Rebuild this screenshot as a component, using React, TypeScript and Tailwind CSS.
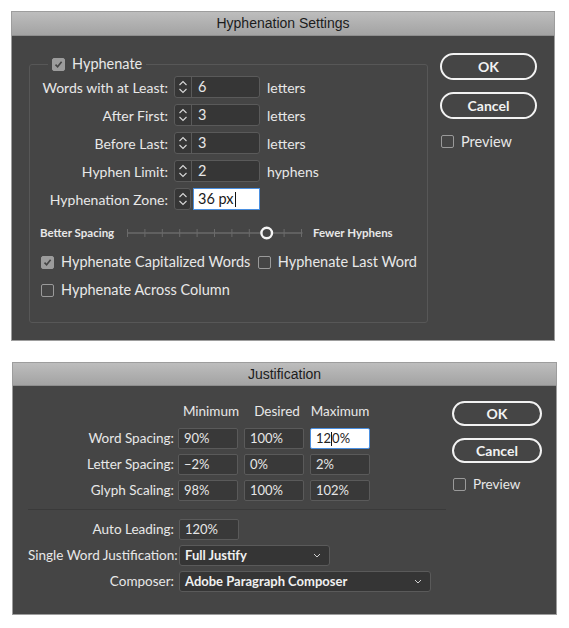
import React from "react"

function Check({ checked = false }: { checked?: boolean }) {
  return (
    <span
      className={
        "inline-flex h-[13px] w-[13px] shrink-0 items-center justify-center rounded-[2px] border " +
        (checked ? "border-[#9c9c9c] bg-[#9c9c9c]" : "border-[#9a9a9a] bg-transparent")
      }
    >
      {checked && (
        <svg width="9" height="9" viewBox="0 0 9 9">
          <path d="M1.5 4.6 L3.6 6.8 L7.6 1.8" fill="none" stroke="#454545" strokeWidth="1.6" />
        </svg>
      )}
    </span>
  )
}

function Arrows() {
  return (
    <svg width="10" height="16" viewBox="0 0 10 16">
      <path d="M1.5 6 L5 2.5 L8.5 6" fill="none" stroke="#d8d8d8" strokeWidth="1.1" />
      <path d="M1.5 10 L5 13.5 L8.5 10" fill="none" stroke="#d8d8d8" strokeWidth="1.1" />
    </svg>
  )
}

function Spinner({ value }: { value: string }) {
  return (
    <div className="flex h-[22px] w-[86px] items-stretch rounded-[3px] border border-[#5a5a5a] bg-[#363636]">
      <div className="flex w-[17px] items-center justify-center border-r border-[#5a5a5a]">
        <Arrows />
      </div>
      <div className="flex items-center pl-[6px] text-[14.5px] text-[#e8e8e8]">{value}</div>
    </div>
  )
}

function Pill({ label, w, h }: { label: string; w: string; h: string }) {
  return (
    <button
      type="button"
      className={
        "flex items-center justify-center rounded-full border-2 border-[#f2f2f2] text-[14px] font-bold text-[#f2f2f2] " +
        w +
        " " +
        h
      }
    >
      {label}
    </button>
  )
}

function TitleBar({ title, h }: { title: string; h: string }) {
  return (
    <div
      className={
        "flex items-center justify-center border-b border-[#8e8e8e] bg-gradient-to-b from-[#bdbdbd] to-[#a3a3a3] font-['Liberation_Sans',sans-serif] text-[14px] text-[#1c1c1c] " +
        h
      }
    >
      {title}
    </div>
  )
}

function Field({ value, focus = false }: { value: React.ReactNode; focus?: boolean }) {
  return (
    <div
      className={
        "flex h-[21px] w-[60px] items-center rounded-[2px] border pl-[5px] text-[13px] " +
        (focus ? "border-[#4a8fe0] bg-white text-[#222]" : "border-[#5a5a5a] bg-[#393939] text-[#e6e6e6]")
      }
    >
      {value}
    </div>
  )
}

function Dropdown({ value, w }: { value: string; w: string }) {
  return (
    <div
      className={
        "flex h-[21px] items-center justify-between rounded-[3px] border border-[#5a5a5a] bg-[#353535] pl-[5px] pr-[8px] text-[13px] font-bold text-[#f0f0f0] " +
        w
      }
    >
      <span>{value}</span>
      <svg width="8" height="5" viewBox="0 0 8 5">
        <path d="M1 1 L4 4 L7 1" fill="none" stroke="#d0d0d0" strokeWidth="1" />
      </svg>
    </div>
  )
}

export default function App() {
  const ticks = Array.from({ length: 11 }, (_, i) => 0.5 + i * 17.4)

  return (
    <div className="min-h-[628px] w-[569px] whitespace-nowrap bg-white pt-[11px] font-['Lato','Liberation_Sans',sans-serif] text-[#e8e8e8]">
      {/* Hyphenation Settings */}
      <div className="ml-[11px] h-[330px] w-[544px] overflow-hidden border border-[#9d9d9d] bg-[#454545]">
        <TitleBar title="Hyphenation Settings" h="h-[24px]" />
        <div className="flex">
          <fieldset className="ml-[17px] mt-[20px] h-[267px] w-[399px] min-w-0 shrink-0 rounded-[3px] border border-[#575757] px-[10px]">
            <legend className="ml-[8px] flex items-center gap-[7px] px-[4px] text-[14.5px] leading-[16px]">
              <Check checked />
              <span>Hyphenate</span>
            </legend>

            <div className="mt-[4px] flex flex-col gap-[6px] text-[14px]">
              {[
                ["Words with at Least:", "6", "letters"],
                ["After First:", "3", "letters"],
                ["Before Last:", "3", "letters"],
                ["Hyphen Limit:", "2", "hyphens"],
              ].map(([label, value, unit]) => (
                <div key={label} className="flex h-[22px] items-center">
                  <div className="w-[128px] text-right">{label}</div>
                  <div className="ml-[6px]">
                    <Spinner value={value} />
                  </div>
                  <div className="ml-[7px]">{unit}</div>
                </div>
              ))}
              <div className="flex h-[22px] items-center">
                <div className="w-[128px] text-right">Hyphenation Zone:</div>
                <div className="ml-[6px] flex h-[22px] w-[17px] items-center justify-center rounded-[3px] border border-[#5a5a5a] bg-[#363636]">
                  <Arrows />
                </div>
                <div className="ml-[2px] flex h-[22px] w-[67px] items-center border border-[#4a8fe0] bg-white pl-[4px] text-[14.5px] text-[#1a1a1a]">
                  36 px<span className="ml-[1px] inline-block h-[15px] w-px bg-[#111]" />
                </div>
              </div>
            </div>

            <div className="mt-[16px] flex h-[14px] items-center text-[11.5px] font-bold">
              <div className="w-[87px]">Better Spacing</div>
              <svg width="176" height="14" viewBox="0 0 176 14">
                <line x1="0" y1="7" x2="175.5" y2="7" stroke="#6a6a6a" strokeWidth="1.5" />
                {ticks.map((x) => (
                  <line key={x} x1={x} y1="3" x2={x} y2="11" stroke="#6a6a6a" strokeWidth="1" />
                ))}
                <circle cx={ticks[8]} cy="7" r="5.3" fill="#454545" stroke="#f4f4f4" strokeWidth="2.4" />
              </svg>
              <div className="ml-[10px]">Fewer Hyphens</div>
            </div>

            <div className="mt-[13px] flex h-[18px] items-center text-[14.5px]">
              <div className="ml-[1px] flex w-[217px] items-center gap-[7px]">
                <Check checked />
                <span>Hyphenate Capitalized Words</span>
              </div>
              <div className="flex items-center gap-[7px]">
                <Check />
                <span>Hyphenate Last Word</span>
              </div>
            </div>
            <div className="mt-[10px] flex h-[18px] items-center gap-[7px] pl-[1px] text-[14.5px]">
              <Check />
              <span>Hyphenate Across Column</span>
            </div>
          </fieldset>

          <div className="ml-[12px] mt-[17px] flex flex-col">
            <Pill label="OK" w="w-[97px]" h="h-[27px]" />
            <div className="mt-[12px]">
              <Pill label="Cancel" w="w-[97px]" h="h-[27px]" />
            </div>
            <div className="mt-[12px] flex items-center gap-[7px] pl-[1px] text-[14.5px]">
              <Check />
              <span>Preview</span>
            </div>
          </div>
        </div>
      </div>

      {/* Justification */}
      <div className="ml-[12px] mt-[21px] h-[253px] w-[545px] overflow-hidden border border-[#9d9d9d] bg-[#454545]">
        <TitleBar title="Justification" h="h-[23px]" />
        <div className="flex">
          <div className="ml-[15px] w-[418px] shrink-0">
            <div className="mt-[17px] flex h-[16px] items-center text-[13.5px]">
              <div className="w-[150px]" />
              <div className="w-[66px] text-center">Minimum</div>
              <div className="w-[66px] text-center">Desired</div>
              <div className="w-[60px] text-center">Maximum</div>
            </div>
            <div className="mt-[9px] flex flex-col gap-[5px] text-[13.5px]">
              <div className="flex h-[21px] items-center">
                <div className="w-[146px] text-right">Word Spacing:</div>
                <div className="ml-[4px] flex gap-[6px]">
                  <Field value="90%" />
                  <Field value="100%" />
                  <Field
                    focus
                    value={
                      <>
                        12<span className="inline-block h-[14px] w-px bg-[#111]" />0%
                      </>
                    }
                  />
                </div>
              </div>
              <div className="flex h-[21px] items-center">
                <div className="w-[146px] text-right">Letter Spacing:</div>
                <div className="ml-[4px] flex gap-[6px]">
                  <Field value="−2%" />
                  <Field value="0%" />
                  <Field value="2%" />
                </div>
              </div>
              <div className="flex h-[21px] items-center">
                <div className="w-[146px] text-right">Glyph Scaling:</div>
                <div className="ml-[4px] flex gap-[6px]">
                  <Field value="98%" />
                  <Field value="100%" />
                  <Field value="102%" />
                </div>
              </div>
            </div>

            <div className="mt-[8px] h-px w-[418px] bg-[#3a3a3a]" />

            <div className="mt-[9px] flex flex-col gap-[5px] text-[13.5px]">
              <div className="flex h-[21px] items-center">
                <div className="w-[146px] text-right">Auto Leading:</div>
                <div className="ml-[5px]">
                  <Field value="120%" />
                </div>
              </div>
              <div className="flex h-[21px] items-center">
                <div className="w-[146px] text-right">Single Word Justification:</div>
                <div className="ml-[5px]">
                  <Dropdown value="Full Justify" w="w-[151px]" />
                </div>
              </div>
              <div className="flex h-[21px] items-center">
                <div className="w-[146px] text-right">Composer:</div>
                <div className="ml-[5px]">
                  <Dropdown value="Adobe Paragraph Composer" w="w-[252px]" />
                </div>
              </div>
            </div>
          </div>

          <div className="ml-[6px] mt-[15px] flex flex-col">
            <Pill label="OK" w="w-[90px]" h="h-[25px]" />
            <div className="mt-[12px]">
              <Pill label="Cancel" w="w-[90px]" h="h-[25px]" />
            </div>
            <div className="mt-[11px] flex items-center gap-[7px] pl-[1px] text-[13.5px]">
              <Check />
              <span>Preview</span>
            </div>
          </div>
        </div>
      </div>
    </div>
  )
}
